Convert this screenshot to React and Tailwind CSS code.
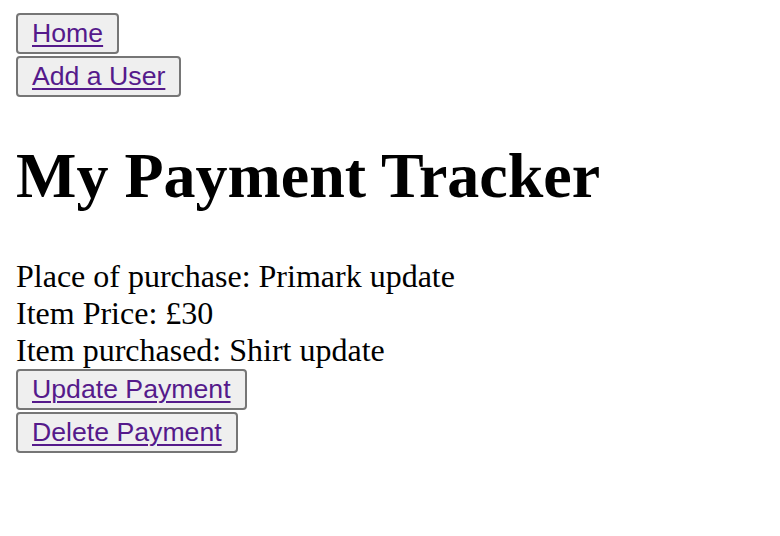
import React from "react";

function Btn({ children }) {
  return (
    <div className="flex">
      <button
        type="button"
        className="h-[41px] border-2 border-[#767676] rounded-[4px] bg-[#efefef] px-[14px] pt-[3px] pb-[4px] flex items-start"
      >
        <a
          href="#"
          className="text-[26.67px] leading-[30px] text-[#551a8b] underline decoration-[2px] underline-offset-[3px]"
          style={{ fontFamily: '"Liberation Sans", Arial, sans-serif' }}
        >
          {children}
        </a>
      </button>
    </div>
  );
}

export default function App() {
  return (
    <div
      className="min-h-[536px] w-[780px] bg-white text-black pl-[16px] pt-[13px]"
      style={{ fontFamily: '"Liberation Serif", "Times New Roman", serif' }}
    >
      <div className="flex flex-col gap-[2px]">
        <Btn>Home</Btn>
        <Btn>Add a User</Btn>
      </div>
      <h1 className="mt-[42px] mb-[45px] text-[64px] leading-[74px] font-bold">
        My Payment Tracker
      </h1>
      <div className="text-[32px] leading-[37px]">
        <div>Place of purchase: Primark update</div>
        <div>Item Price: £30</div>
        <div>Item purchased: Shirt update</div>
      </div>
      <div className="flex flex-col gap-[2px]">
        <Btn>Update Payment</Btn>
        <Btn>Delete Payment</Btn>
      </div>
    </div>
  );
}
